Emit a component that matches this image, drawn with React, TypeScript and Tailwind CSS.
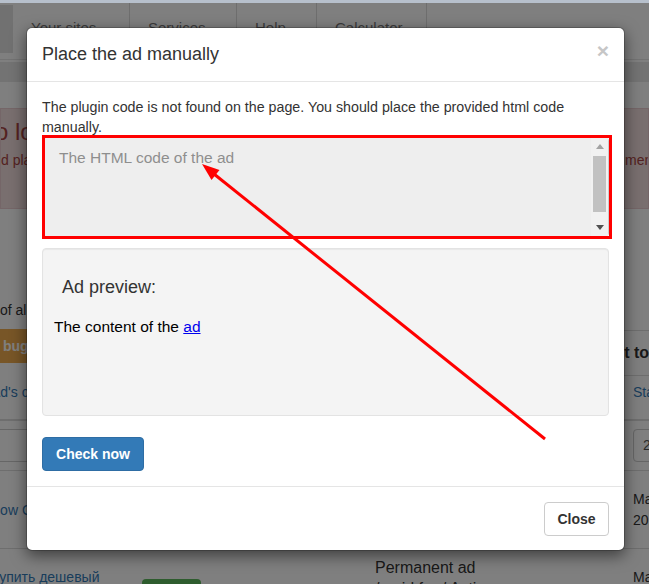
import React from 'react'

const tabs = [
  { name: 'Your sites', w: 'w-[117px]' },
  { name: 'Services', w: 'w-[107px]' },
  { name: 'Help', w: 'w-[80px]' },
  { name: 'Calculator', w: 'w-[110px]' },
]

function Page() {
  return (
    <div>
      {/* navbar */}
      <div className="h-[57px] flex bg-white border-b border-[#e7e7e7]">
        <div className="w-[13px] mt-[2px] h-[48px] bg-[#e2e2e2]" />
        {tabs.map((t) => (
          <div key={t.name} className={`${t.w} pl-[18px] pt-[15px] text-[15px] leading-[20px] text-[#777] border-r border-[#dcdcdc] whitespace-nowrap`}>
            {t.name}
          </div>
        ))}
      </div>
      <div className="mt-[2px] h-[20px] bg-[#e6e6e6]" />

      {/* alert */}
      <div className="mt-[26px] h-[101px] border border-[#ebccd1] bg-[#f2dede] text-[#a94442] pt-[9px] overflow-hidden">
        <div className="text-[24px] leading-[28px] -ml-[6px] whitespace-nowrap">o lower the price of your ads</div>
        <div className="mt-[4px] flex justify-between text-[14px] leading-[20px] whitespace-nowrap">
          <span>d place the code</span>
          <span className="-mr-[12px]">menu</span>
        </div>
      </div>

      {/* stats + side panel */}
      <div className="mt-[91px] flex items-start">
        <div className="w-[612px]">
          <div className="text-[14px] leading-[20px] whitespace-nowrap">of all the sites</div>
          <div className="mt-[9px] inline-block h-[34px] pl-[3px] pr-[12px] rounded-r-[4px] bg-[#f0ad4e] text-white font-bold text-[14px] leading-[34px] whitespace-nowrap">
            bug report
          </div>
        </div>
        <div className="flex-1 mt-[30px] h-[46px] border-y border-[#ddd] pl-[16px] pt-[12px] text-[16px] leading-[20px] font-bold whitespace-nowrap">
          t to
        </div>
      </div>

      {/* table */}
      <div className="text-[14px] leading-[20px]">
        <div className="grid grid-cols-[136px_100px_68px_65px_258px_1fr] h-[45px] border-b-2 border-[#ddd] pt-[6px] text-[#337ab7] whitespace-nowrap">
          <div className="-ml-[9px]">Ad's code</div>
          <div />
          <div />
          <div />
          <div />
          <div className="pl-[6px]">Status</div>
        </div>
        <div className="grid grid-cols-[136px_100px_68px_65px_258px_1fr] h-[50px] border-b border-[#ddd] pt-[8px]">
          <div className="-ml-[10px] h-[33px] border border-[#ccc] rounded-[4px] bg-white" />
          <div />
          <div />
          <div />
          <div />
          <div className="pl-[6px]">
            <div className="h-[33px] w-[60px] border border-[#ccc] rounded-[4px] bg-white pl-[9px] leading-[31px] text-[#555]">20</div>
          </div>
        </div>
        <div className="grid grid-cols-[136px_100px_68px_65px_258px_1fr] h-[78px] items-center border-b border-[#ddd] whitespace-nowrap">
          <div className="-ml-[10px] text-[#337ab7]">How Cheap</div>
          <div />
          <div />
          <div />
          <div />
          <div className="pl-[6px] leading-[21px]">
            <div>Mar 12,</div>
            <div>2019</div>
          </div>
        </div>
        <div className="grid grid-cols-[136px_100px_68px_65px_258px_1fr] h-[80px] items-start whitespace-nowrap">
          <div className="-ml-[9px] pt-[18px] text-[#337ab7]">Купить дешевый</div>
          <div className="pl-[6px] pt-[30px]">
            <div className="w-[59px] h-[34px] rounded-[4px] bg-[#5cb85c] text-white font-bold text-center leading-[34px]">Active</div>
          </div>
          <div className="pl-[6px] pt-[33px]">0</div>
          <div className="pl-[6px] pt-[33px]">$0.04</div>
          <div className="pl-[6px] pt-[8px] text-[16px] leading-[21px]">
            <div>Permanent ad</div>
            <div>/ paid for / Active</div>
          </div>
          <div className="pl-[6px] pt-[18px]">Mar 12,</div>
        </div>
      </div>
    </div>
  )
}

function ScrollBar() {
  return (
    <div className="w-[17px] bg-[#f1f1f1] flex flex-col items-center">
      <div className="h-[17px] flex items-center justify-center">
        <svg width="8" height="5" viewBox="0 0 8 5"><polygon points="4,0 8,5 0,5" fill="#a3a3a3" /></svg>
      </div>
      <div className="mt-[1px] w-[13px] h-[56px] bg-[#c1c1c1]" />
      <div className="flex-1" />
      <div className="h-[17px] flex items-center justify-center">
        <svg width="8" height="5" viewBox="0 0 8 5"><polygon points="0,0 8,0 4,5" fill="#505050" /></svg>
      </div>
    </div>
  )
}

function Modal() {
  return (
    <div className="w-[599px] rounded-[6px] bg-white border border-black/20 bg-clip-padding shadow-[0_5px_15px_rgba(0,0,0,0.5)] text-[#333]">
      <div className="flex justify-between items-start px-[15px] pt-[14px] pb-[15px] border-b border-[#e5e5e5]">
        <h4 className="text-[18px] leading-[24px] text-[#333]">Place the ad manually</h4>
        <button className="text-[21px] font-bold leading-none text-[#c6c6c6] mt-[-2px]">×</button>
      </div>

      <div className="p-[15px]">
        <p className="text-[14.25px] leading-[20px]">
          The plugin code is not found on the page. You should place the provided html code manually.
        </p>

        <div className="relative h-[100px] border border-[#ccc] rounded-[4px] bg-[#eee] flex">
          <div className="flex-1 pl-[16px] pt-[9px] text-[15.5px] leading-[22px] text-[#8e8e8e]">The HTML code of the ad</div>
          <ScrollBar />
          <div className="absolute -left-[1px] -right-[4px] -top-[3px] -bottom-[3px] border-[3px] border-[#ff0000]" />
        </div>

        <div className="mt-[11px] h-[168px] rounded-[4px] border border-[#e3e3e3] bg-[#f4f4f4] shadow-[inset_0_1px_1px_rgba(0,0,0,0.05)] px-[19px] pt-[19px]">
          <h4 className="mt-[9px] text-[18px] leading-[20px] text-[#333]">Ad preview:</h4>
          <div className="mt-[21px] -ml-[8px] text-[15.5px] leading-[18px] text-black">
            The content of the <a href="#" className="text-[#0000ee] underline">ad</a>
          </div>
        </div>

        <button className="mt-[21px] w-[102px] h-[34px] rounded-[4px] border border-[#2e6da4] bg-[#337ab7] text-white font-bold text-[14px]">
          Check now
        </button>
      </div>

      <div className="flex justify-end border-t border-[#e5e5e5] px-[15px] pt-[15px] pb-[14px]">
        <button className="w-[65px] h-[34px] rounded-[4px] border border-[#ccc] bg-white font-bold text-[14px] text-[#333]">
          Close
        </button>
      </div>
    </div>
  )
}

function Arrow() {
  return (
    <svg className="absolute inset-0 pointer-events-none" width="649" height="584" viewBox="0 0 649 584">
      <line x1="545" y1="439" x2="214" y2="174" stroke="#ff0000" strokeWidth="3" />
      <polygon points="202,164 219.5,170 211.5,180" fill="#ff0000" />
    </svg>
  )
}

export default function App() {
  return (
    <div className="relative w-[649px] h-[584px] overflow-hidden bg-white font-['Liberation_Sans',Arial,sans-serif] text-[#333]">
      <div className="h-[3px] bg-[#b7c0cc]" />
      <Page />
      <div className="absolute inset-x-0 top-[3px] bottom-0 bg-black/50 pt-[24px] pl-[26px]">
        <Modal />
      </div>
      <Arrow />
    </div>
  )
}
